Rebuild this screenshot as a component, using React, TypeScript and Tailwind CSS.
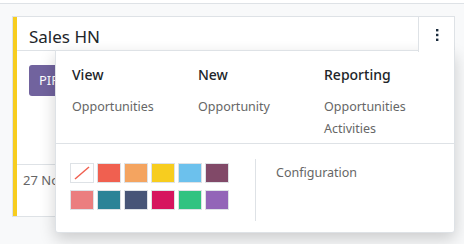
import React from "react";

const colors = [
  "#F06050", "#F4A460", "#F7CD1F", "#6CC1ED", "#814968",
  "#EB7E7F", "#2C8397", "#475577", "#D6145F", "#30C381", "#9365B8",
];

export default function App() {
  return (
    <div
      className="w-[464px] h-[244px] bg-white overflow-hidden"
      style={{ fontFamily: '"Noto Sans", Roboto, sans-serif' }}
    >
      <div className="h-[3px] bg-white" />
      <div className="h-[241px] bg-[#f8f9fa] border-t border-[#dee2e6] pt-[12px] pl-[12px]">
        <div className="relative w-[443px] h-[201px] bg-white border border-[#dee2e6] flex">
          <div className="w-[4px] bg-[#f7cd1f] shrink-0" />
          <div className="flex-1 flex flex-col">
            <div className="h-[34px] flex border-b border-[#dee2e6]">
              <div className="flex-1 pl-[12px] pt-[6px] flex items-center text-[17px] text-[#212529] leading-none">
                Sales HN
              </div>
            </div>
            <div className="h-[113px] pl-[12px] pt-[14px]">
              <div className="w-[60px] h-[31px] rounded-[3px] bg-[#71639e] text-white text-[13px] flex items-center pl-[10px]">
                PIPELINE
              </div>
            </div>
            <div className="border-t border-[#dee2e6] pl-[6px] pt-[6px] text-[13px] text-[#666]">
              27 Nov
            </div>
          </div>
          {/* kebab toggle */}
          <div className="absolute right-0 top-0 w-[36px] h-[35px] bg-white border-l border-[#dee2e6] flex items-center justify-center z-20">
            <svg width="4" height="12" viewBox="0 0 4 12">
              <rect x="1" y="0" width="2.4" height="2.4" fill="#1a2b3c" />
              <rect x="1" y="4.8" width="2.4" height="2.4" fill="#1a2b3c" />
              <rect x="1" y="9.6" width="2.4" height="2.4" fill="#1a2b3c" />
            </svg>
          </div>
          {/* dropdown */}
          <div className="absolute left-[42px] top-[33px] w-[400px] h-[183px] bg-white border border-[#dee2e6] rounded-b-[3px] shadow-[0_6px_16px_rgba(0,0,0,0.18)] z-10 flex flex-col">
            <div className="flex pl-[16px] pt-[14px] h-[93px] border-b border-[#dee2e6]">
              <div className="w-[126px]">
                <div className="text-[14px] font-medium text-[#212529] leading-[20px]">View</div>
                <div className="mt-[12px] text-[12.5px] text-[#666] leading-[20px]">Opportunities</div>
              </div>
              <div className="w-[126px]">
                <div className="text-[14px] font-medium text-[#212529] leading-[20px]">New</div>
                <div className="mt-[12px] text-[12.5px] text-[#666] leading-[20px]">Opportunity</div>
              </div>
              <div className="w-[126px]">
                <div className="text-[14px] font-medium text-[#212529] leading-[20px]">Reporting</div>
                <div className="mt-[12px] text-[12.5px] text-[#666] leading-[20px]">Opportunities</div>
                <div className="mt-[2px] text-[12.5px] text-[#666] leading-[20px]">Activities</div>
              </div>
            </div>
            <div className="flex pt-[15px]">
              <div className="pl-[14px] pr-[26px] pt-[4px] border-r border-[#dee2e6] h-[62px] w-[200px]">
                <div className="grid grid-cols-6 gap-x-[3px] gap-y-[7px] w-[159px]">
                  <div className="w-[24px] h-[20px] border border-[#dee2e6] bg-white relative">
                    <svg className="absolute inset-0" width="22" height="18" viewBox="0 0 22 18">
                      <line x1="4" y1="15" x2="18" y2="3" stroke="#F06050" strokeWidth="1.5" />
                    </svg>
                  </div>
                  {colors.map((c) => (
                    <div
                      key={c}
                      className="w-[24px] h-[20px] border border-[#dee2e6]"
                      style={{ backgroundColor: c }}
                    />
                  ))}
                </div>
              </div>
              <div className="pl-[20px] text-[12.5px] text-[#666] leading-[20px] pt-[4px]">
                Configuration
              </div>
            </div>
          </div>
        </div>
      </div>
    </div>
  );
}
